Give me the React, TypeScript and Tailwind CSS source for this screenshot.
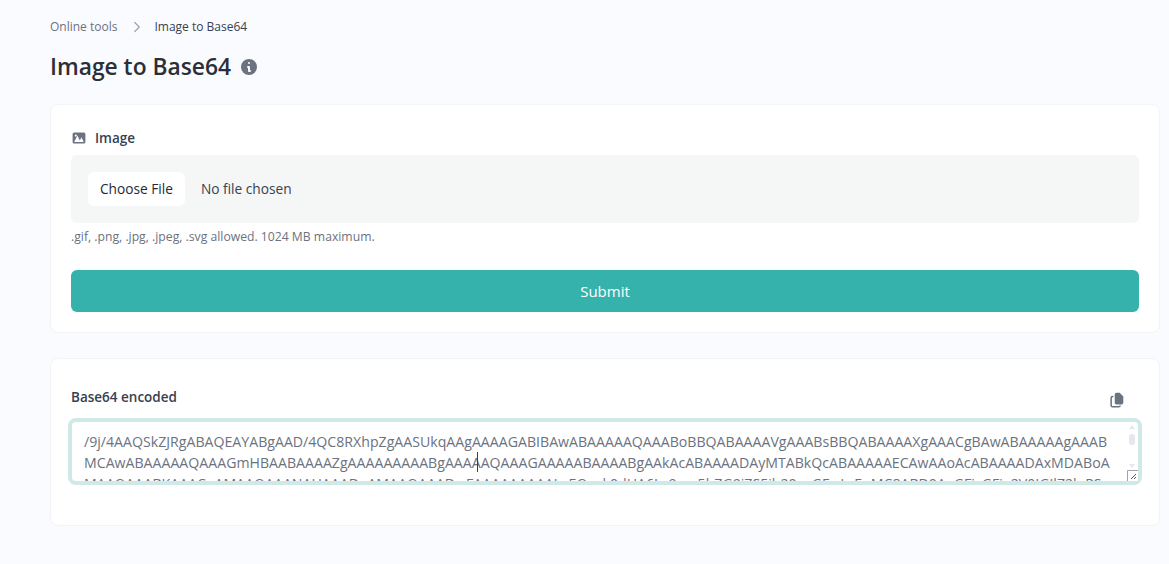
import { ChevronRight } from "lucide-react";

const encodedLines = [
  "/9j/4AAQSkZJRgABAQEAYABgAAD/4QC8RXhpZgAASUkqAAgAAAAGABIBAwABAAAAAQAAABoBBQABAAAAVgAAABsBBQABAAAAXgAAACgBAwABAAAAAgAAAB",
  "MCAwABAAAAAQAAAGmHBAABAAAAZgAAAAAAAAABgAAAAAQAAAGAAAAABAAAABgAAkAcABAAAADAyMTABkQcABAAAAAECAwAAoAcABAAAADAxMDABoA",
  "MAAQAAABKAAACoAMAAQAAANAHAAADoAMAAQAAADwFAAAAAAAAAJwEQgxk0dHA6Ly9vcy5hZG9iZS5jb20veGFwLzEuMC8ABD0AeGFjcGFja2V0IGJlZ2luPS",
];

export default function App() {
  return (
    <div className="min-h-[564px] bg-[#fafbfe] pl-[50px] pr-[9px] font-['Open_Sans',sans-serif] text-[#6b7280]">
      <nav className="flex items-center pt-[18px] text-[12px] leading-[18px]">
        <span className="text-[#6b7280]">Online tools</span>
        <ChevronRight className="mr-[8px] ml-[11px] h-[18px] w-[18px] text-[#9ca3af]" strokeWidth={1.6} />
        <span className="text-[#374151]">Image to Base64</span>
      </nav>

      <div className="mt-[15px] flex items-center gap-[8px]">
        <h1 className="text-[22.8px] leading-[32px] font-semibold text-[#2b2f38]">Image to Base64</h1>
        <svg viewBox="0 0 20 20" className="h-[20px] w-[20px] fill-[#6b7280]">
          <path
            fillRule="evenodd"
            d="M18 10a8 8 0 1 1-16 0 8 8 0 0 1 16 0zm-7-4a1 1 0 1 1-2 0 1 1 0 0 1 2 0zM9 9a1 1 0 0 0 0 2v3a1 1 0 0 0 1 1h1a1 1 0 1 0 0-2v-3a1 1 0 0 0-1-1H9z"
          />
        </svg>
      </div>

      <section className="mt-[21px] rounded-lg border border-[#f3f4f6] bg-white px-[20px] pt-[23px] pb-[20px]">
        <label className="flex items-center gap-[8px] text-[13.5px] leading-[20px] font-semibold text-[#374151]">
          <svg viewBox="0 0 20 20" className="h-[16px] w-[16px] fill-[#6b7280]">
            <path
              fillRule="evenodd"
              d="M4 3a2 2 0 0 0-2 2v10a2 2 0 0 0 2 2h12a2 2 0 0 0 2-2V5a2 2 0 0 0-2-2H4zm12 12H4l4-8 3 6 2-4 3 6z"
            />
            <circle cx="6" cy="7" r="1.3" fill="#ffffff" />
          </svg>
          Image
        </label>
        <div className="mt-[7px] rounded-md bg-[#f5f6f6] py-[17px] pr-[16px] pl-[17px]">
          <input
            type="file"
            className="block w-full text-[13.7px] leading-[34px] text-[#374151] file:mr-[16px] file:h-[34px] file:rounded-md file:border-0 file:bg-white file:px-[12px] file:text-[13.7px] file:font-normal file:text-[#1f2937]"
          />
        </div>
        <p className="mt-[5px] text-[12.2px] leading-[18px]">.gif, .png, .jpg, .jpeg, .svg allowed. 1024 MB maximum.</p>
        <button className="mt-[24px] block h-[42px] w-full rounded-md bg-[#36b2ac] text-[15px] text-white">Submit</button>
      </section>

      <section className="mt-[25px] rounded-lg border border-[#f3f4f6] bg-white px-[20px] pt-[26px] pb-[40px]">
        <div className="flex items-center justify-between">
          <h2 className="text-[13.5px] leading-[20px] font-semibold text-[#374151]">Base64 encoded</h2>
          <svg viewBox="0 0 20 20" className="mt-[6px] mr-[13px] h-[18px] w-[18px] fill-[#6b7280]">
            <path d="M9.5 2H13l4 4v7a2 2 0 0 1-2 2H9.5a2 2 0 0 1-2-2V4a2 2 0 0 1 2-2z" />
            <path d="M6 6H5a1.5 1.5 0 0 0-1.5 1.5V16A1.5 1.5 0 0 0 5 17.5h7a1.5 1.5 0 0 0 1.5-1.5" fill="none" stroke="#6b7280" strokeWidth="1.7" />
          </svg>
        </div>
        <div className="relative mt-[9px]">
          <textarea
            readOnly
            wrap="off"
            value={encodedLines.join("\n")}
            className="-ml-[3px] block h-[67px] w-[calc(100%+6px)] resize-none overflow-hidden rounded-lg border-[4px] border-[#cfe9e7] bg-white py-[9px] pr-[2px] pl-[12px] text-[14.15px] leading-[21px] text-[#6b7280] outline-none"
          />
          {/* caret caught mid line */}
          <div className="absolute top-[34px] left-[406px] h-[20px] w-px bg-[#374151]" />
          {/* scrollbar */}
          <div className="absolute top-[7px] right-0 flex h-[43px] w-[14px] flex-col items-center">
            <div className="h-0 w-0 border-x-[3px] border-b-[4px] border-x-transparent border-b-[#e5e7eb]" />
            <div className="mt-[5px] h-[11px] w-[6px] rounded-full bg-[#e5e7eb]" />
            <div className="mt-auto h-0 w-0 border-x-[3px] border-t-[4px] border-x-transparent border-t-[#e5e7eb]" />
          </div>
          {/* resize grip */}
          <svg viewBox="0 0 11 11" className="absolute top-[52px] right-[1px] h-[11px] w-[11px] bg-white">
            <path d="M.5 11V.5H11" fill="none" stroke="#9ca3af" />
            <path d="M4 9l5-5M7 9l2-2" stroke="#4b5563" fill="none" />
          </svg>
        </div>
      </section>
    </div>
  );
}
